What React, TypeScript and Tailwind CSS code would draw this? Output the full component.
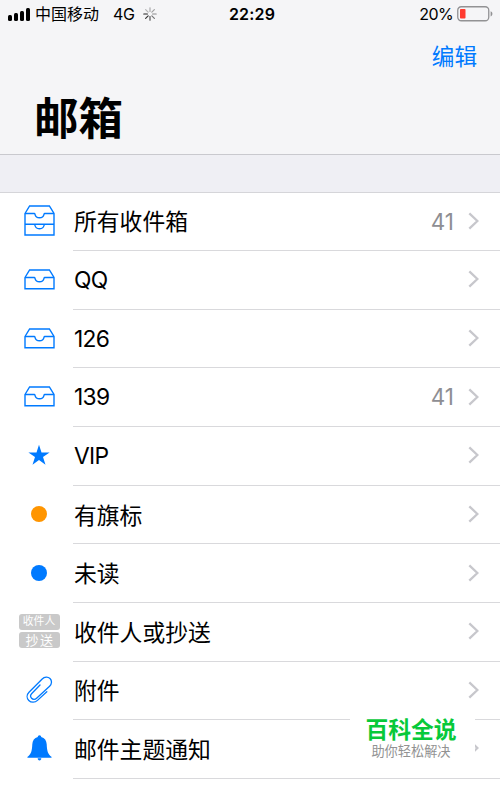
import type { ReactNode } from "react";

const BLUE = "#007aff";

type Mailbox = {
  name: string;
  icon: ReactNode;
  count?: number;
};

const MAILBOXES: Mailbox[] = [
  { name: "所有收件箱", icon: <AllInboxesIcon />, count: 41 },
  { name: "QQ", icon: <InboxIcon /> },
  { name: "126", icon: <InboxIcon /> },
  { name: "139", icon: <InboxIcon />, count: 41 },
  { name: "VIP", icon: <StarIcon /> },
  { name: "有旗标", icon: <Dot tone="orange" /> },
  { name: "未读", icon: <Dot tone="blue" /> },
  { name: "收件人或抄送", icon: <ToCcIcon /> },
  { name: "附件", icon: <PaperclipIcon /> },
  { name: "邮件主题通知", icon: <BellIcon /> },
];

const isLatin = (name: string) => /^\w+$/.test(name);

export default function App() {
  return (
    <div className="relative w-[500px] h-[790px] overflow-hidden bg-white text-black font-[Inter,'Noto_Sans_CJK_SC',sans-serif]">
      <header className="h-[155px] bg-[#f5f5f7] border-b border-[#c9c9ce]">
        <StatusBar />
        <div className="flex justify-end h-[57px] items-center pt-px pr-[23px]">
          <button className="text-[22.6px] leading-none text-[#007aff]">编辑</button>
        </div>
        <h1 className="pl-[34px] pt-[12px] text-[44.5px] leading-[44px] font-bold">邮箱</h1>
      </header>
      <div className="h-[37.5px] bg-[#efeff4] border-b border-[#d5d5d9]" />
      <ul>
        {MAILBOXES.map((box) => (
          <MailboxRow key={box.name} box={box} />
        ))}
      </ul>
      <Watermark />
    </div>
  );
}

function StatusBar() {
  return (
    <div className="flex items-center h-[28px] text-[16px] leading-none">
      <div className="flex items-center w-[200px] pl-[8px]">
        <div className="flex items-end gap-[2px] h-[13px]">
          <span className="w-[4px] h-[6px] rounded-[1.5px] bg-black" />
          <span className="w-[4px] h-[8px] rounded-[1.5px] bg-black" />
          <span className="w-[4px] h-[10px] rounded-[1.5px] bg-black" />
          <span className="w-[4px] h-[13px] rounded-[1.5px] bg-black" />
        </div>
        <span className="ml-[5px]">中国移动</span>
        <span className="ml-[14px] tracking-[-0.3px]">4G</span>
        <Spinner />
      </div>
      <div className="w-[104px] text-center text-[16px] font-semibold tracking-[0.2px]">22:29</div>
      <div className="flex flex-1 items-center justify-end pr-[7px]">
        <span className="tracking-[-0.6px]">20%</span>
        <Battery />
      </div>
    </div>
  );
}

const SPOKES = [1, 0.3, 0.35, 0.4, 0.5, 0.6, 0.75, 0.9];

function Spinner() {
  return (
    <svg className="ml-[8px]" width="14" height="14" viewBox="0 0 14 14">
      {SPOKES.map((opacity, i) => (
        <line
          key={i}
          x1="7"
          y1="4.4"
          x2="7"
          y2="0.8"
          stroke="#222"
          strokeWidth="1.2"
          strokeLinecap="round"
          opacity={opacity}
          transform={`rotate(${i * 45 - 90} 7 7)`}
        />
      ))}
    </svg>
  );
}

function Battery() {
  return (
    <svg className="ml-[4px]" width="36" height="16" viewBox="0 0 36 16">
      <rect x="0.75" y="0.75" width="31" height="14" rx="3.5" fill="none" stroke="#929294" strokeWidth="1.3" />
      <rect x="3" y="3" width="5.5" height="9.6" rx="0.8" fill="#ff3b30" />
      <path d="M33.6 5.2c1.3.5 1.8 1.4 1.8 2.6s-.5 2.1-1.8 2.6z" fill="#929294" />
    </svg>
  );
}

function MailboxRow({ box }: { box: Mailbox }) {
  return (
    <li className="flex h-[58.63px]">
      <div className="flex w-[73px] shrink-0 items-center justify-center pl-[5px] pb-[2px]">{box.icon}</div>
      <div className="flex flex-1 items-center border-b border-[#d9d9dc] pl-px pt-px pr-[21px]">
        <span className={`flex-1 text-[22.8px] leading-none ${isLatin(box.name) ? "tracking-[-0.7px]" : "pt-[2px]"}`}>
          {box.name}
        </span>
        {box.count !== undefined && (
          <span className="mr-[14px] text-[22.5px] leading-none text-[#8e8e93]">{box.count}</span>
        )}
        <Chevron />
      </div>
    </li>
  );
}

function Chevron() {
  return (
    <svg className="mb-[2px]" width="11" height="18" viewBox="0 0 11 18">
      <path d="M1.3 1.3 9.4 9l-8.1 7.7" fill="none" stroke="#c7c7cc" strokeWidth="2.3" />
    </svg>
  );
}

function InboxIcon() {
  return (
    <svg width="31" height="21" viewBox="0 0 31 21" fill="none" stroke={BLUE} strokeWidth="1.4">
      <path d="M1 8.5 5.6 1h19.8L30 8.5v11.2H1z" />
      <path d="M1 8.5h9.2c.5 0 .7.3.8.8.5 2.3 2.2 3.5 4.5 3.5s4-1.2 4.5-3.5c.1-.5.3-.8.8-.8H30" />
    </svg>
  );
}

function AllInboxesIcon() {
  return (
    <svg width="31" height="31" viewBox="0 0 31 31" fill="none" stroke={BLUE} strokeWidth="1.4">
      <path d="M1 8.5 5.6 1h19.8L30 8.5V30H1z" />
      <path d="M1 8.5h9.2c.5 0 .7.3.8.8.5 2.3 2.2 3.5 4.5 3.5s4-1.2 4.5-3.5c.1-.5.3-.8.8-.8H30" />
      <path d="M1 19.2h29M10.7 19.2c.3 2.9 2.2 4.5 4.8 4.5s4.5-1.6 4.8-4.5" />
    </svg>
  );
}

function StarIcon() {
  return (
    <svg width="22" height="22" viewBox="0 0 22 22">
      <path d="M11 .7l2.5 7.7h8.1L15 13.1l2.5 7.7-6.5-4.7-6.5 4.7L7 13.1.4 8.4h8.1z" fill={BLUE} />
    </svg>
  );
}

function Dot({ tone }: { tone: "orange" | "blue" }) {
  return <span className={`size-[16px] rounded-full ${tone === "orange" ? "bg-[#ff9500]" : "bg-[#007aff]"}`} />;
}

function ToCcIcon() {
  return (
    <div className="flex flex-col gap-[2px] text-white text-center">
      <span className="w-[41px] h-[16px] rounded-[3px] bg-[#c9c9c9] text-[10.8px] leading-[16px]">收件人</span>
      <span className="w-[41px] h-[16px] rounded-[3px] bg-[#c9c9c9] text-[13px] leading-[16px] tracking-[1.5px] pl-[2px]">抄送</span>
    </div>
  );
}

function PaperclipIcon() {
  return (
    <svg width="27" height="28" viewBox="0 0 27 28" fill="none" stroke={BLUE} strokeWidth="1.3" strokeLinecap="round">
      <path d="M20.8 15.7 11.5 24.4C9 26.8 5.1 26.8 2.8 24.5S.6 18.7 3 16.3L16.2 3C18.5.7 21.9.5 24 2.5s2 5.5-.4 7.7L10.6 22.2c-1.5 1.4-3.7 1.5-5 .1s-1.200-3.400.2-4.800L14 9" />
    </svg>
  );
}

function BellIcon() {
  return (
    <svg width="25" height="26" viewBox="0 0 25 26" fill={BLUE}>
      <path d="M12.5.3c1 0 1.7.7 1.7 1.7 3.5.9 5.3 3.5 5.500 7.300.3 6.400 1 9.800 4.700 12.400.4.300.3 1-.4 1H1c-.7 0-.8-.7-.4-1 3.700-2.600 4.400-6 4.700-12.400.2-3.800 2-6.400 5.500-7.300 0-1 .7-1.700 1.700-1.700z" />
      <path d="M10.700 23.300h3.600c0 1.300-.7 2.200-1.800 2.200s-1.800-.9-1.800-2.200z" />
    </svg>
  );
}

function Watermark() {
  return (
    <div className="absolute left-[350px] top-[714px] flex h-[58px] w-[125px] flex-col items-center bg-white pr-[3px] pt-[4px]">
      <span className="text-[22.8px] leading-[24px] font-bold text-[#07c93a]">百科全说</span>
      <span className="mt-[2px] text-[13.2px] leading-[15px] text-[#929292]">助你轻松解决</span>
    </div>
  );
}
